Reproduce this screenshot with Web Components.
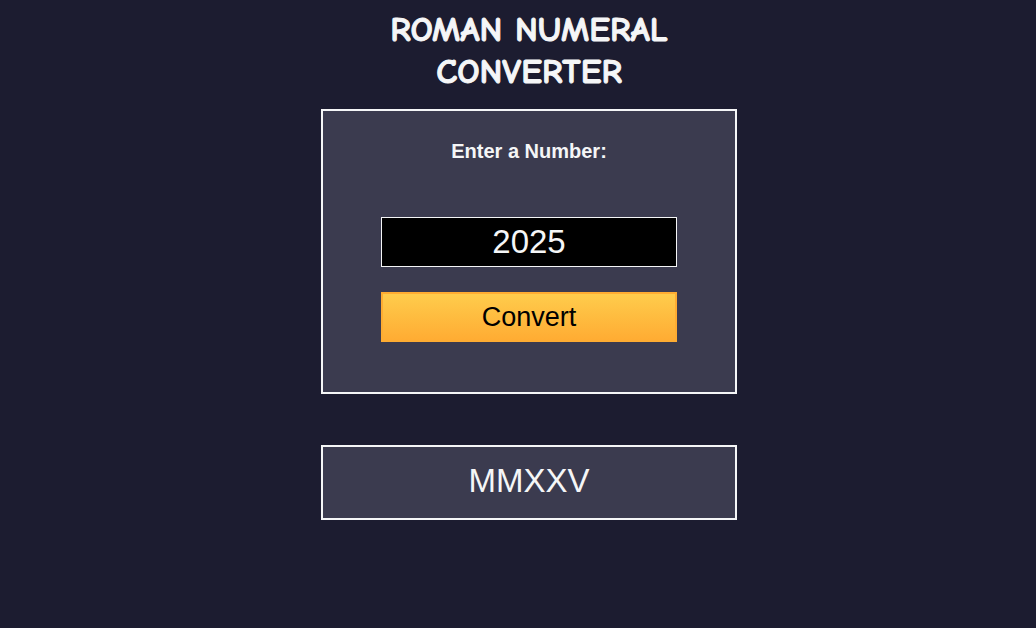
<!DOCTYPE html>
<html lang="en">
<head>
<meta charset="utf-8">
<meta name="viewport" content="width=device-width, initial-scale=1">
<title>Roman Numeral Converter</title>
<style>
  :root {
    --page: #1c1c30;
    --panel: #3b3b4f;
    --ink: #f5f6f7;
  }
  body {
    margin: 0;
    background: var(--page);
    color: var(--ink);
    font-family: Arial, "Liberation Sans", sans-serif;
  }
</style>
</head>
<body>
<roman-app></roman-app>

<template id="app-template">
  <style>
    :host { display: block; padding: 9px 0 24px 22px; }
    main { display: flex; flex-direction: column; align-items: center; }
    roman-form, roman-result { width: 416px; max-width: 100%; }
    roman-result { margin-top: 51px; }
  </style>
  <main>
    <roman-title>Roman Numeral Converter</roman-title>
    <roman-form value="2025">Enter a Number:</roman-form>
    <roman-result>MMXXV</roman-result>
  </main>
</template>

<template id="title-template">
  <style>
    :host { display: block; max-width: 320px; margin-bottom: 16px; }
    h1 {
      margin: 0;
      font: bold 35px/42px "Comic Sans MS", "Comic Neue", Lato, sans-serif;
      -webkit-text-stroke: 1px currentColor;
      text-align: center;
      text-transform: uppercase;
    }
  </style>
  <h1><slot></slot></h1>
</template>

<template id="form-template">
  <style>
    :host {
      display: block;
      box-sizing: border-box;
      padding: 28px 58px 50px;
      border: 2px solid var(--ink);
      background: var(--panel);
    }
    form { display: flex; flex-direction: column; }
    label { margin-bottom: 54px; font-size: 20px; line-height: 24px; font-weight: bold; text-align: center; }
    input, button {
      box-sizing: border-box;
      width: 100%;
      height: 50px;
      margin: 0;
      border-radius: 0;
      font-family: inherit;
      text-align: center;
    }
    input {
      margin-bottom: 25px;
      padding: 0 8px;
      border: 1px solid var(--ink);
      background: #000;
      color: var(--ink);
      font-size: 33px;
    }
    button {
      padding: 0;
      border: 2px solid #feac32;
      background: linear-gradient(#fecc4c, #ffac33);
      color: #000;
      font-size: 27px;
      cursor: pointer;
    }
  </style>
  <form>
    <label for="number"><slot></slot></label>
    <input id="number" type="text" inputmode="numeric" autocomplete="off">
    <button type="submit">Convert</button>
  </form>
</template>

<template id="result-template">
  <style>
    :host {
      display: block;
      box-sizing: border-box;
      padding: 14px 8px 17px;
      border: 2px solid var(--ink);
      background: var(--panel);
      font-size: 33px;
      line-height: 40px;
      text-align: center;
      overflow-wrap: anywhere;
    }
    output { display: block; }
  </style>
  <output><slot></slot></output>
</template>

<script>
  class TemplateElement extends HTMLElement {
    constructor() {
      super();
      const template = document.getElementById(this.constructor.template);
      this.attachShadow({ mode: "open" }).append(template.content.cloneNode(true));
    }
  }

  function toRoman(n) {
    const steps = [[1000, "M"], [900, "CM"], [500, "D"], [400, "CD"], [100, "C"], [90, "XC"],
      [50, "L"], [40, "XL"], [10, "X"], [9, "IX"], [5, "V"], [4, "IV"], [1, "I"]];
    let out = "";
    for (const [value, letters] of steps) {
      while (n >= value) { out += letters; n -= value; }
    }
    return out;
  }

  customElements.define("roman-title", class extends TemplateElement {
    static template = "title-template";
  });

  customElements.define("roman-result", class extends TemplateElement {
    static template = "result-template";
  });

  customElements.define("roman-form", class extends TemplateElement {
    static template = "form-template";
    connectedCallback() {
      const input = this.shadowRoot.querySelector("input");
      input.value = this.getAttribute("value") || "";
      this.shadowRoot.querySelector("form").addEventListener("submit", (event) => {
        event.preventDefault();
        this.dispatchEvent(new CustomEvent("convert", { detail: Number(input.value) }));
      });
    }
  });

  customElements.define("roman-app", class extends TemplateElement {
    static template = "app-template";
    connectedCallback() {
      const result = this.shadowRoot.querySelector("roman-result");
      this.shadowRoot.querySelector("roman-form").addEventListener("convert", ({ detail }) => {
        const valid = Number.isInteger(detail) && detail > 0 && detail < 4000;
        result.textContent = valid ? toRoman(detail) : "Invalid";
      });
    }
  });
</script>
</body>
</html>
